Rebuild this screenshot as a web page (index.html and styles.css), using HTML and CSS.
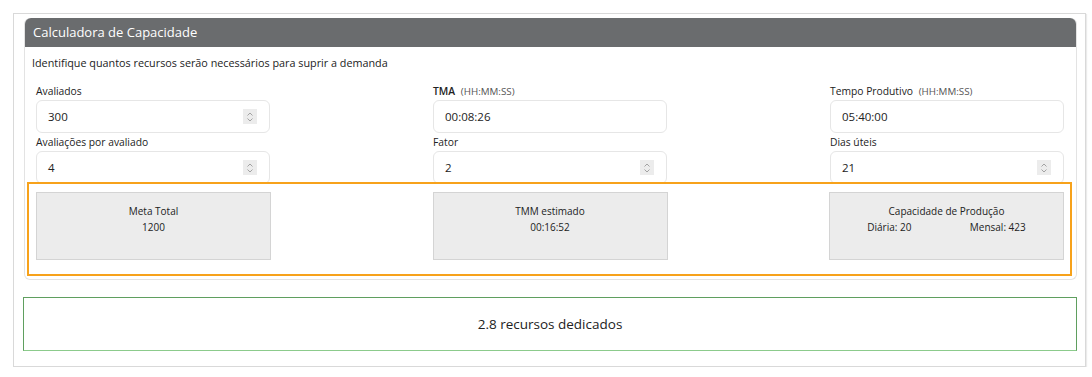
FILE: index.html
```html
<!DOCTYPE html>
<html lang="pt-BR">
<head>
  <meta charset="UTF-8" />
  <title>Calculadora de Capacidade</title>
  <link rel="stylesheet" href="styles.css">
</head>
<body>
  <div class="wrap">
    <div class="card">
      <div class="card-header">Calculadora de Capacidade</div>
      <div class="card-body">
        <p class="lead">Identifique quantos recursos serão necessários para suprir a demanda</p>

        <div class="fields">
          <div class="field">
            <label>Avaliados</label>
            <div class="input">300<span class="spin"><svg width="8" height="10" viewBox="0 0 8 10"><path d="M1.5 3.5 4 1 6.5 3.5M1.5 6.5 4 9 6.5 6.5" fill="none" stroke="#9a9a9a" stroke-width="0.9"/></svg></span></div>
          </div>
          <div class="field">
            <label><b>TMA</b> <span class="hint">(HH:MM:SS)</span></label>
            <div class="input">00:08:26</div>
          </div>
          <div class="field">
            <label>Tempo Produtivo <span class="hint">(HH:MM:SS)</span></label>
            <div class="input">05:40:00</div>
          </div>
          <div class="field">
            <label>Avaliações por avaliado</label>
            <div class="input">4<span class="spin"><svg width="8" height="10" viewBox="0 0 8 10"><path d="M1.5 3.5 4 1 6.5 3.5M1.5 6.5 4 9 6.5 6.5" fill="none" stroke="#9a9a9a" stroke-width="0.9"/></svg></span></div>
          </div>
          <div class="field">
            <label>Fator</label>
            <div class="input">2<span class="spin"><svg width="8" height="10" viewBox="0 0 8 10"><path d="M1.5 3.5 4 1 6.5 3.5M1.5 6.5 4 9 6.5 6.5" fill="none" stroke="#9a9a9a" stroke-width="0.9"/></svg></span></div>
          </div>
          <div class="field">
            <label>Dias úteis</label>
            <div class="input">21<span class="spin"><svg width="8" height="10" viewBox="0 0 8 10"><path d="M1.5 3.5 4 1 6.5 3.5M1.5 6.5 4 9 6.5 6.5" fill="none" stroke="#9a9a9a" stroke-width="0.9"/></svg></span></div>
          </div>
        </div>

        <div class="results">
          <div class="result">
            <div>Meta Total</div>
            <div>1200</div>
          </div>
          <div class="result">
            <div>TMM estimado</div>
            <div>00:16:52</div>
          </div>
          <div class="result">
            <div>Capacidade de Produção</div>
            <div class="split"><span>Diária: 20</span><span>Mensal: 423</span></div>
          </div>
        </div>
      </div>
    </div>

    <div class="total">2.8 recursos dedicados</div>
  </div>
</body>
</html>
```

FILE: styles.css
```css
body {
  font-family: 'Open Sans', sans-serif;
  background-color: #fff;
  color: #222;
  margin: 0;
  padding: 0;
}
.wrap {
  margin: 13px 6px 0 13px;
  padding: 4px 0 15px 0;
  border: 1px solid #d9d9d9;
  box-shadow: 1px 1px 1px rgba(0,0,0,0.08);
}
.card {
  margin: 0 8px 0 10px;
  border: 1px solid #e3e3e3;
  border-top: none;
  border-radius: 6px;
}
.card-header {
  background-color: #6a6c6e;
  color: #fff;
  height: 29px;
  line-height: 29px;
  padding-left: 8px;
  font-size: 13px;
  border-radius: 6px 6px 0 0;
}
.card-body {
  padding-bottom: 3px;
}
.lead {
  margin: 8px 0 0 7px;
  font-size: 10.8px;
  line-height: 16px;
}
.fields {
  display: grid;
  grid-template-columns: repeat(3, 234px);
  justify-content: space-between;
  row-gap: 2px;
  padding: 0 12px 0 11px;
  margin-top: 13px;
}
.field label {
  display: block;
  font-size: 10.3px;
  line-height: 14px;
  height: 14px;
  color: #222;
  margin-bottom: 2px;
}
.field label b {
  font-weight: 600;
}
.hint {
  color: #555;
  font-size: 9.8px;
  margin-left: 3px;
}
.input {
  height: 33px;
  box-sizing: border-box;
  border: 1px solid #e6e6e6;
  border-radius: 6px;
  padding: 0 12px 0 11px;
  font-size: 11.5px;
  display: flex;
  align-items: center;
  justify-content: space-between;
}
.spin {
  width: 14px;
  height: 15px;
  background: #ececec;
  display: flex;
  align-items: center;
  justify-content: center;
}
.results {
  position: relative;
  margin: -2px 4px 0 2px;
  border: 2px solid #f7a21b;
  padding: 8px 6px 14px 7px;
  display: grid;
  grid-template-columns: repeat(3, 235px);
  justify-content: space-between;
  background: #fff;
}
.result {
  background: #ececec;
  border: 1px solid #d4d4d4;
  height: 68px;
  box-sizing: border-box;
  padding-top: 10px;
  text-align: center;
  font-size: 10px;
  line-height: 16px;
}
.split {
  display: flex;
  justify-content: space-around;
  padding: 0 8px;
}
.total {
  margin: 17px 8px 0 9px;
  height: 54px;
  box-sizing: border-box;
  border: 1px solid #5f9f5f;
  border-bottom-color: #8ccb8c;
  display: flex;
  align-items: center;
  justify-content: center;
  font-size: 13.5px;
}
```
